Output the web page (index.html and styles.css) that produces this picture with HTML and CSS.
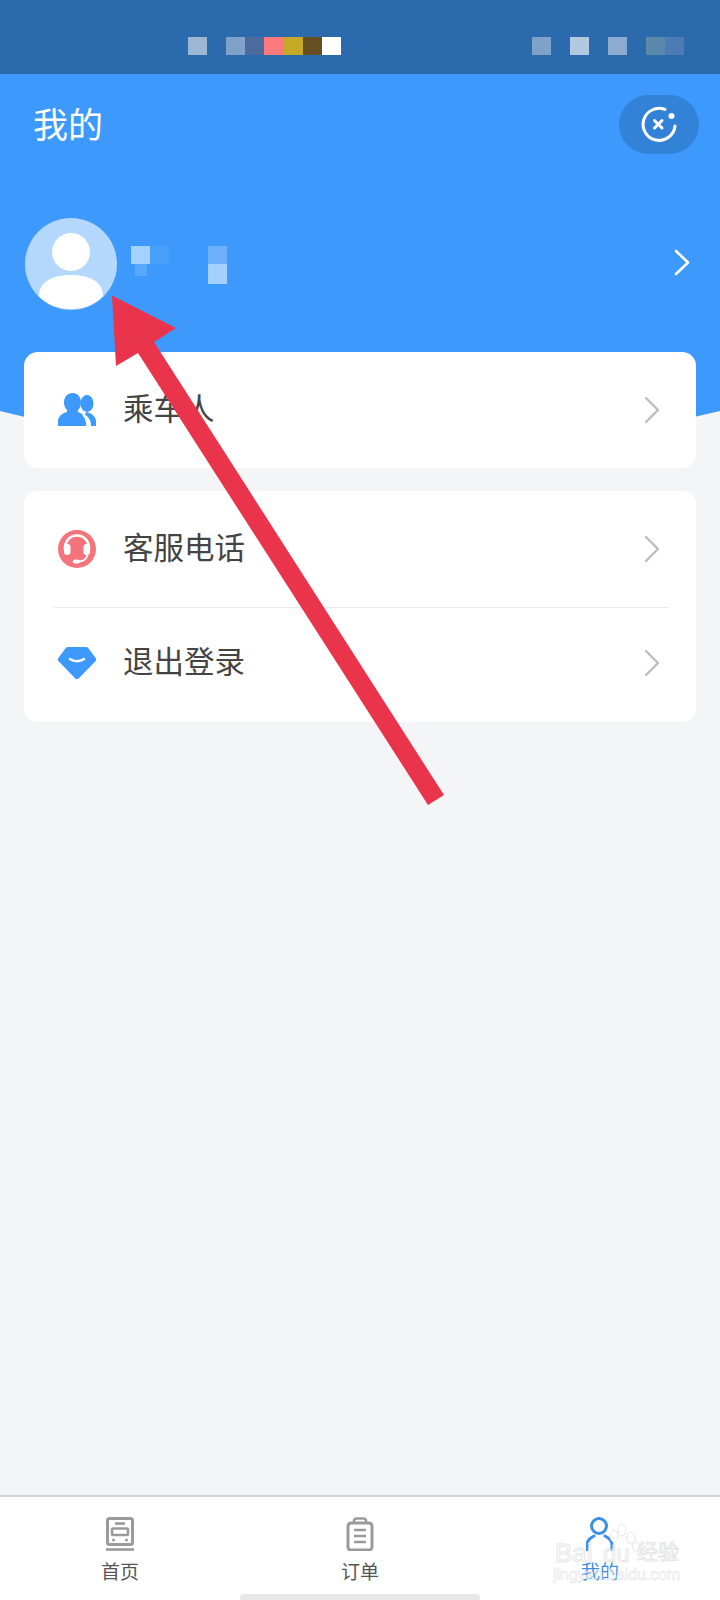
FILE: index.html
```html
<!DOCTYPE html>
<html>
<head>
  <meta charset="UTF-8">
  <title>我的</title>
  <link rel="stylesheet" href="styles.css">
</head>
<body>
  <div class="page">
    <div class="statusbar">
      <div class="mosaic">
        <i class="px c1"></i><i class="px gap c2"></i><i class="px c3"></i><i class="px c4"></i><i class="px c5"></i><i class="px c6"></i><i class="px c7"></i>
      </div>
      <div class="mosaic">
        <i class="px c2"></i><i class="px gap c8"></i><i class="px gap c9"></i><i class="px gap c10"></i><i class="px c11"></i>
      </div>
    </div>

    <div class="header">
      <div class="title-row">
        <h1 class="title">我的</h1>
        <div class="pill">
          <svg width="40" height="40" viewBox="0 0 40 40" fill="none" stroke="#fff" stroke-linecap="round">
            <path d="M26 4.500A16 16 0 1 0 36 21" stroke-width="3"/>
            <circle cx="32.500" cy="11" r="3" fill="#fff" stroke="none"/>
            <path d="M15.500 15.500l7.500 7.500M23 15.500l-7.500 7.500" stroke-width="3"/>
          </svg>
        </div>
      </div>
      <div class="profile">
        <div class="avatar">
          <svg width="92" height="92" viewBox="0 0 92 92" fill="#fff">
            <circle cx="46" cy="34" r="19"/>
            <path d="M14 78C14 66 24 57 46 57S78 66 78 78C70 87 58 91 46 91S22 87 14 78Z"/>
          </svg>
        </div>
        <div class="name-blur">
          <i class="nb n1"></i><i class="nb n2"></i><i class="nb n3"></i><i class="nb n4"></i><i class="nb n5"></i>
        </div>
        <svg class="profile-arrow" width="16" height="27" viewBox="0 0 16 27" fill="none" stroke="#fff" stroke-width="2.6" stroke-linecap="round" stroke-linejoin="round"><path d="M2 2l12 11.5L2 25"/></svg>
      </div>
    </div>

    <div class="content">
      <div class="card">
        <div class="row">
          <svg class="row-icon" width="38" height="34" viewBox="0 0 38 34" fill="#3d99fc">
            <ellipse cx="29" cy="10.500" rx="6.500" ry="8.500"/>
            <path d="M28 19c6 1 10 5 10 9v5h-5c0-5-2-9-6-11z"/>
            <path d="M14.500 0C9.500 0 6 4 6 9.500c0 3 1 5.500 3 7.500v2C4 20 0 24 0 28v5h29v-4c0-4-4-8-9-10v-2c2-2 3-4.500 3-7.500C23 4 19.500 0 14.500 0z" stroke="#fff" stroke-width="0"/>
            <path d="M29 33c0-5-1-8-4-11" fill="none" stroke="#fff" stroke-width="1.600"/>
          </svg>
          <span class="row-text">乘车人</span>
          <svg class="chev" width="16" height="28" viewBox="0 0 16 28" fill="none" stroke="#bdbdbd" stroke-width="2.4" stroke-linecap="round" stroke-linejoin="round"><path d="M2 2l12 12L2 26"/></svg>
        </div>
      </div>

      <div class="card">
        <div class="row">
          <svg class="row-icon" width="38" height="38" viewBox="0 0 38 38">
            <circle cx="19" cy="19" r="19" fill="#f4747b"/>
            <path d="M7 20C6.500 11 12 5.500 19 5.500S31.500 11 31 20" fill="none" stroke="#fff" stroke-width="2.600"/>
            <rect x="6" y="14" width="6.500" height="11" rx="3" fill="#fff"/>
            <rect x="25.500" y="14" width="6.500" height="11" rx="3" fill="#fff"/>
            <path d="M11.500 12c1-3 4-4 7.500-4s6.500 1 7.500 4c-1 2-3.500 3-4 5-.3 2 .5 4 1.500 6-1 2-3 3-5 3s-4-1-5-3c1-2 1.800-4 1.500-6-.5-2-3-3-4-5z" fill="#f4747b"/>
            <path d="M29.500 25c-1 4-4 6-8 6.500" fill="none" stroke="#fff" stroke-width="1.800"/>
            <ellipse cx="18.500" cy="31.500" rx="3.800" ry="2" fill="#fff"/>
          </svg>
          <span class="row-text">客服电话</span>
          <svg class="chev" width="16" height="28" viewBox="0 0 16 28" fill="none" stroke="#bdbdbd" stroke-width="2.4" stroke-linecap="round" stroke-linejoin="round"><path d="M2 2l12 12L2 26"/></svg>
        </div>
        <div class="divider"></div>
        <div class="row row-last">
          <svg class="row-icon" width="38" height="34" viewBox="0 0 38 34">
            <path d="M10 4h18l7 9.500L19 30 3 13.500z" fill="#3d99fc" stroke="#3d99fc" stroke-width="6" stroke-linejoin="round"/>
            <path d="M12 13c4 3 10 3 14 0" fill="none" stroke="#fff" stroke-width="2.400" stroke-linecap="round"/>
          </svg>
          <span class="row-text">退出登录</span>
          <svg class="chev" width="16" height="28" viewBox="0 0 16 28" fill="none" stroke="#bdbdbd" stroke-width="2.4" stroke-linecap="round" stroke-linejoin="round"><path d="M2 2l12 12L2 26"/></svg>
        </div>
      </div>
    </div>

    <div class="tabbar">
      <div class="tabs">
        <div class="tab">
          <svg width="28" height="34" viewBox="0 0 28 34" fill="none" stroke="#9a9a9a" stroke-width="3">
            <rect x="1.500" y="1.500" width="25" height="26" rx="2"/>
            <path d="M9 6.500h10" stroke-width="2.600"/>
            <rect x="6" y="11.500" width="16" height="6.500" rx="1" stroke-width="2.600"/>
            <circle cx="7.500" cy="23" r="1.500" fill="#9a9a9a" stroke="none"/>
            <circle cx="20.500" cy="23" r="1.500" fill="#9a9a9a" stroke="none"/>
            <path d="M0 32.500h28" stroke-width="2.600"/>
          </svg>
          <span class="tab-label">首页</span>
        </div>
        <div class="tab">
          <svg width="28" height="34" viewBox="0 0 28 34" fill="none" stroke="#9a9a9a" stroke-width="3" stroke-linejoin="round">
            <rect x="2" y="6" width="24" height="27" rx="3"/>
            <path d="M8 6V4c0-1.500 1-2.500 2.500-2.500h7C19 1.500 20 2.500 20 4v2" stroke-width="2.600"/>
            <path d="M8 13h12M8 19h12M8 25h12" stroke-width="2.400"/>
          </svg>
          <span class="tab-label">订单</span>
        </div>
        <div class="tab tab-active">
          <svg width="28" height="34" viewBox="0 0 28 34" fill="none" stroke="#3d8fe5" stroke-width="3" stroke-linecap="round">
            <circle cx="13" cy="9" r="7.500"/>
            <path d="M8 19c-4 2-7 5-7 9v5M19 19c4 2 7 5 7 9v5"/>
          </svg>
          <span class="tab-label">我的</span>
        </div>
      </div>
      <div class="home-bar"></div>

      <svg class="watermark" width="150" height="66" viewBox="0 0 150 66">
        <g class="wm-paw">
          <ellipse cx="66" cy="16" rx="4" ry="6"/>
          <ellipse cx="74" cy="10" rx="4" ry="6"/>
          <ellipse cx="83" cy="18" rx="4" ry="6"/>
          <ellipse cx="88" cy="27" rx="3.500" ry="5"/>
        </g>
        <text class="wm-big" x="7" y="42">Bai</text>
        <text class="wm-mid" x="55" y="42">du</text>
        <text class="wm-cn" x="89" y="39">经验</text>
        <text class="wm-url" x="5" y="60" textLength="127">jingyan.baidu.com</text>
      </svg>
    </div>

    <svg class="arrow" width="720" height="1600" viewBox="0 0 720 1600">
      <polygon points="112,295.500 176,328 154,342 444,795 428,805 138,353 116,366" fill="#ea344b"/>
    </svg>
  </div>
</body>
</html>
```

FILE: styles.css
```css
* { box-sizing: border-box; }
body { margin: 0; background: #f4f5f7; font-family: "Noto Sans CJK SC", "Noto Sans", sans-serif; }

.page { position: relative; width: 720px; height: 1600px; display: flex; flex-direction: column; overflow: hidden; }

/* status bar, blurred in the source */
.statusbar { height: 74px; flex: none; background: #2b6aad; padding: 37px 36px 0 188px; display: flex; justify-content: space-between; }
.mosaic { display: flex; height: 18px; }
.px { display: block; width: 19.2px; height: 18px; }
.px.gap { margin-left: 18.800px; }
.c1 { background: #9db6d3; }
.c2 { background: #7fa2c9; }
.c3 { background: #4d6a9f; }
.c4 { background: #fc7a7e; }
.c5 { background: #c6a926; }
.c6 { background: #664f22; }
.c7 { background: #fff; }
.c8 { background: #b3c9e2; }
.c9 { background: #8dabd0; }
.c10 { background: #5c88ab; }
.c11 { background: #4c7cb3; }

.header { height: 400px; flex: none; background: #3d99fc; clip-path: path("M0 0H720V337Q360 427 0 337Z"); }
.title-row { display: flex; justify-content: space-between; align-items: center; padding: 21px 21px 0 33px; }
.title { margin: 0 0 4px; font-size: 35px; font-weight: 400; color: #fff; line-height: 55px; }
.pill { width: 80px; height: 59px; border-radius: 30px; background: #3283d8; display: flex; align-items: center; justify-content: center; }

.profile { display: flex; align-items: center; margin-top: 64px; padding: 0 30px 0 25px; }
.avatar { width: 92px; height: 92px; border-radius: 50%; background: #b3d7fd; overflow: hidden; flex: none; }
.avatar svg { display: block; }
.name-blur { position: relative; flex: 1; height: 40px; margin-left: 14px; }
.nb { position: absolute; display: block; width: 19px; }
.n1 { left: 0; top: 2px; height: 18px; background: #a5d2fd; }
.n2 { left: 19px; top: 2px; height: 18px; background: #479efb; }
.n3 { left: 77px; top: 2px; height: 18px; background: #6fb0fc; }
.n4 { left: 77px; top: 20px; height: 20px; background: #a5d0fd; }
.n5 { left: 4px; top: 20px; height: 12px; width: 12px; background: #58a8fb; }
.profile-arrow { flex: none; margin-top: -4px; }

.content { flex: 1; margin-top: -122px; padding: 0 24px; display: flex; flex-direction: column; gap: 23px; position: relative; }
.card { background: #fff; border-radius: 14px; }
.row { height: 116px; display: flex; align-items: center; padding: 0 36px 0 34px; }
.row-last { height: 114px; padding-bottom: 5px; }
.row-icon { width: 38px; flex: none; }
.row-text { flex: 1; margin-left: 27px; padding-bottom: 6px; font-size: 30.500px; color: #444; line-height: 40px; }
.chev { flex: none; }
.divider { height: 1px; margin: 0 28px 0 30px; background: #e9eaec; }

.tabbar { position: relative; height: 105px; flex: none; background: #fff; border-top: 2px solid #d2d2d2; display: flex; flex-direction: column; }
.tabs { flex: 1; display: flex; }
.tab { flex: 1; display: flex; flex-direction: column; align-items: center; padding-top: 20px; }
.tab svg { display: block; }
.tab-label { margin-top: 9px; font-size: 19px; line-height: 22px; color: #555; }
.tab-active .tab-label { color: #3d8fe5; }
.home-bar { width: 240px; height: 6px; margin: 0 auto; background: #e8e8e8; border-radius: 4px 4px 0 0; }

/* stamp over the bottom right corner */
.watermark { position: absolute; left: 548px; top: 23px; opacity: .75; }
.wm-paw ellipse { fill: #fff; stroke: #dedede; stroke-width: 1; }
.watermark text { font-family: "Liberation Sans", sans-serif; fill: #fff; stroke: #dedede; stroke-width: 1; }
.wm-big { font-size: 26px; }
.wm-mid { font-size: 24px; }
.watermark .wm-cn { font-family: "Noto Sans CJK SC", sans-serif; font-size: 21px; }
.watermark .wm-url { font-size: 16px; stroke-width: .6; }

.arrow { position: absolute; left: 0; top: 0; pointer-events: none; }
```
